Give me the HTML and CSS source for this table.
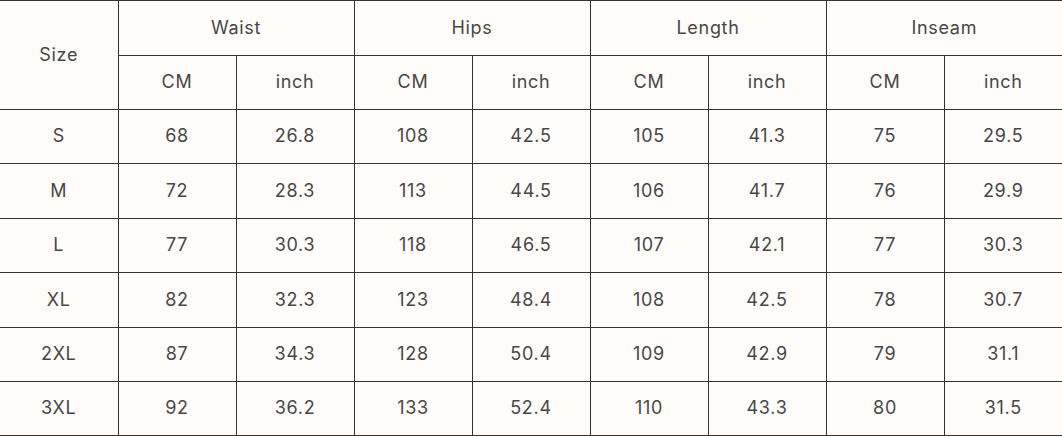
FILE: index.html
```html
<!DOCTYPE html>
<html>
<head>
<meta charset="utf-8">
<link rel="stylesheet" href="styles.css">
</head>
<body>
<table class="size-table">
  <colgroup>
    <col class="c"><col class="c"><col class="c"><col class="c"><col class="c"><col class="c"><col class="c"><col class="c"><col class="c">
  </colgroup>
  <thead>
    <tr class="r1">
      <th rowspan="2" class="first">Size</th>
      <th colspan="2">Waist</th>
      <th colspan="2">Hips</th>
      <th colspan="2">Length</th>
      <th colspan="2" class="last">Inseam</th>
    </tr>
    <tr class="r2">
      <th>CM</th><th>inch</th><th>CM</th><th>inch</th><th>CM</th><th>inch</th><th>CM</th><th class="last">inch</th>
    </tr>
  </thead>
  <tbody>
    <tr class="ra"><td class="first">S</td><td>68</td><td>26.8</td><td>108</td><td>42.5</td><td>105</td><td>41.3</td><td>75</td><td class="last">29.5</td></tr>
    <tr class="rb"><td class="first">M</td><td>72</td><td>28.3</td><td>113</td><td>44.5</td><td>106</td><td>41.7</td><td>76</td><td class="last">29.9</td></tr>
    <tr class="ra"><td class="first">L</td><td>77</td><td>30.3</td><td>118</td><td>46.5</td><td>107</td><td>42.1</td><td>77</td><td class="last">30.3</td></tr>
    <tr class="rb"><td class="first">XL</td><td>82</td><td>32.3</td><td>123</td><td>48.4</td><td>108</td><td>42.5</td><td>78</td><td class="last">30.7</td></tr>
    <tr class="ra"><td class="first">2XL</td><td>87</td><td>34.3</td><td>128</td><td>50.4</td><td>109</td><td>42.9</td><td>79</td><td class="last">31.1</td></tr>
    <tr class="ra"><td class="first">3XL</td><td>92</td><td>36.2</td><td>133</td><td>52.4</td><td>110</td><td>43.3</td><td>80</td><td class="last">31.5</td></tr>
  </tbody>
</table>
</body>
</html>
```
FILE: styles.css
```css
html, body {
  margin: 0;
  padding: 0;
  background: #fffcfa;
}
.size-table {
  width: 1062px;
  border-collapse: collapse;
  table-layout: fixed;
  font-family: Inter, "Open Sans", "Liberation Sans", sans-serif;
  font-size: 18px;
  letter-spacing: 0.7px;
  color: #474747;
}
.size-table .c { width: 118px; }
.size-table th,
.size-table td {
  border: 1px solid #333;
  text-align: center;
  vertical-align: middle;
  font-weight: 400;
  padding: 0 0 2px 0;
}
.size-table .first { border-left: none; }
.size-table .last { border-right: none; }
.r1 { height: 55px; }
.r2 { height: 54px; }
.ra { height: 54px; }
.rb { height: 55px; }
```
